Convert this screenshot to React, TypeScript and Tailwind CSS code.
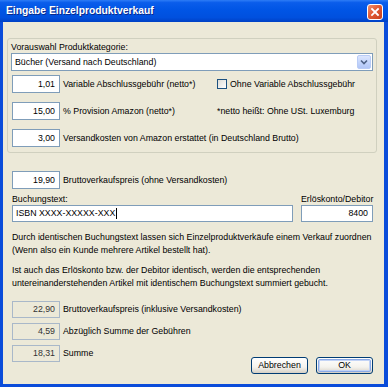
import type { FC, ReactNode } from "react";

const font = "font-['Liberation_Sans',Arial,sans-serif]";

const NumBox: FC<{ value: string; readOnly?: boolean }> = ({ value, readOnly }) => (
  <div
    className={
      readOnly
        ? "w-[48px] h-[17px] border border-[#A9B8C9] bg-[#ECE9D8] text-[#333] flex items-center justify-end pr-[4px] shrink-0"
        : "w-[48px] h-[18px] border border-[#7F9DB9] bg-white flex items-center justify-end pr-[4px] shrink-0"
    }
  >
    {value}
  </div>
);

const Row: FC<{ value: string; children: ReactNode; readOnly?: boolean; labelW?: string }> = ({
  value,
  children,
  readOnly,
  labelW = "",
}) => (
  <div className="flex items-center">
    <NumBox value={value} readOnly={readOnly} />
    <span className={"ml-[3px] whitespace-nowrap " + labelW}>{children}</span>
  </div>
);

const XpButton: FC<{ label: string; primary?: boolean }> = ({ label, primary }) => (
  <div className="w-[57px] h-[17px] rounded-[3px] border border-[#003C74] bg-[linear-gradient(to_bottom,#FFFFFF_0%,#F4F3EE_60%,#D6D0C5_100%)] p-[1px]">
    <div
      className={
        "w-full h-full rounded-[2px] flex items-center justify-center " +
        (primary ? "border border-[#8CAAE6] shadow-[inset_0_0_0_1px_#C3D4F6]" : "")
      }
    >
      {label}
    </div>
  </div>
);

export default function App() {
  return (
    <div className={"w-[388px] h-[387px] bg-[#0A4CDA] flex flex-col text-[8.8px] leading-[11px] text-black " + font}>
      {/* title bar */}
      <div className="h-[22px] shrink-0 flex items-center justify-between pl-[6px] pr-[5px] bg-[linear-gradient(to_bottom,#2D7CF6_0%,#0A5DEB_12%,#0055E5_45%,#0050DE_80%,#0040C4_100%)]">
        <span className="text-white font-bold text-[10.3px] leading-[12px] [text-shadow:1px_1px_0_#0A2A8A]">
          Eingabe Einzelproduktverkauf
        </span>
        <div className="w-[16px] h-[16px] mt-[1px] rounded-[3px] border border-white bg-[linear-gradient(135deg,#F0906F_0%,#E15A33_45%,#C7401C_100%)] flex items-center justify-center">
          <svg width="10" height="10" viewBox="0 0 10 10">
            <path d="M2 2 L8 8 M8 2 L2 8" stroke="white" strokeWidth="1.8" strokeLinecap="square" />
          </svg>
        </div>
      </div>

      {/* client area */}
      <div className="flex-1 ml-[3px] mr-[4px] mb-[3px] bg-[#ECE9D8] flex flex-col pt-[16px]">
        {/* group box */}
        <div className="ml-[4px] w-[370px] border border-[#D0D0BF] rounded-[3px] pl-[3px] pt-[3px] pb-[5px] flex flex-col">
          <span>Vorauswahl Produktkategorie:</span>
          <div className="w-[362px] h-[18px] border border-[#7F9DB9] bg-white flex items-center justify-between pl-[3px] pr-[1px]">
            <span>Bücher (Versand nach Deutschland)</span>
            <div className="w-[14px] h-[14px] rounded-[2px] bg-[linear-gradient(to_bottom,#DCE6FE_0%,#C1D3FB_60%,#B2C6F6_100%)] border border-[#B9CCF6] flex items-center justify-center">
              <svg width="8" height="6" viewBox="0 0 8 6">
                <path d="M1 1.5 L4 4.5 L7 1.5" fill="none" stroke="#4D6185" strokeWidth="1.6" />
              </svg>
            </div>
          </div>
          <div className="flex flex-col gap-[9px] mt-[4px] pl-[1px]">
            <div className="flex items-center">
              <Row value="1,01" labelW="w-[154px]">
                Variable Abschlussgebühr (netto*)
              </Row>
              <div className="w-[10px] h-[10px] border border-[#1C5180] bg-[linear-gradient(135deg,#DCDCD7_0%,#FFFFFF_100%)] shrink-0" />
              <span className="ml-[3px]">Ohne Variable Abschlussgebühr</span>
            </div>
            <div className="flex items-center">
              <Row value="15,00" labelW="w-[154px]">
                % Provision Amazon (netto*)
              </Row>
              <span>*netto heißt: Ohne USt. Luxemburg</span>
            </div>
            <Row value="3,00">Versandkosten von Amazon erstattet (in Deutschland Brutto)</Row>
          </div>
        </div>

        {/* lower part */}
        <div className="flex-1 flex flex-col pl-[9px] pr-[11px]">
          <div className="mt-[18px]">
            <Row value="19,90">Bruttoverkaufspreis (ohne Versandkosten)</Row>
          </div>
          <div className="flex mt-[5px] gap-[8px]">
            <div className="flex flex-col">
              <span>Buchungstext:</span>
              <div className="w-[281px] h-[17px] border border-[#7F9DB9] bg-white flex items-center pl-[3px]">
                <span className="border-r border-black pr-[0.5px]">ISBN XXXX-XXXXX-XXX</span>
              </div>
            </div>
            <div className="flex flex-col">
              <span>Erlöskonto/Debitor</span>
              <div className="w-[72px] h-[17px] border border-[#7F9DB9] bg-white flex items-center justify-end pr-[4px]">
                8400
              </div>
            </div>
          </div>

          <p className="mt-[9px] leading-[12.5px]">
            Durch identischen Buchungstext lassen sich Einzelproduktverkäufe einem Verkauf zuordnen
            <br />
            (Wenn also ein Kunde mehrere Artikel bestellt hat).
          </p>
          <p className="mt-[8px] leading-[12.5px]">
            Ist auch das Erlöskonto bzw. der Debitor identisch, werden die entsprechenden
            <br />
            untereinanderstehenden Artikel mit identischem Buchungstext summiert gebucht.
          </p>

          <div className="flex justify-between items-end mt-[12px]">
            <div className="flex flex-col gap-[5px]">
              <Row value="22,90" readOnly>
                Bruttoverkaufspreis (inklusive Versandkosten)
              </Row>
              <Row value="4,59" readOnly>
                Abzüglich Summe der Gebühren
              </Row>
              <Row value="18,31" readOnly>
                Summe
              </Row>
            </div>
            <div className="flex gap-[8px] mb-[-12px]">
              <XpButton label="Abbrechen" />
              <XpButton label="OK" primary />
            </div>
          </div>
        </div>
      </div>
    </div>
  );
}
